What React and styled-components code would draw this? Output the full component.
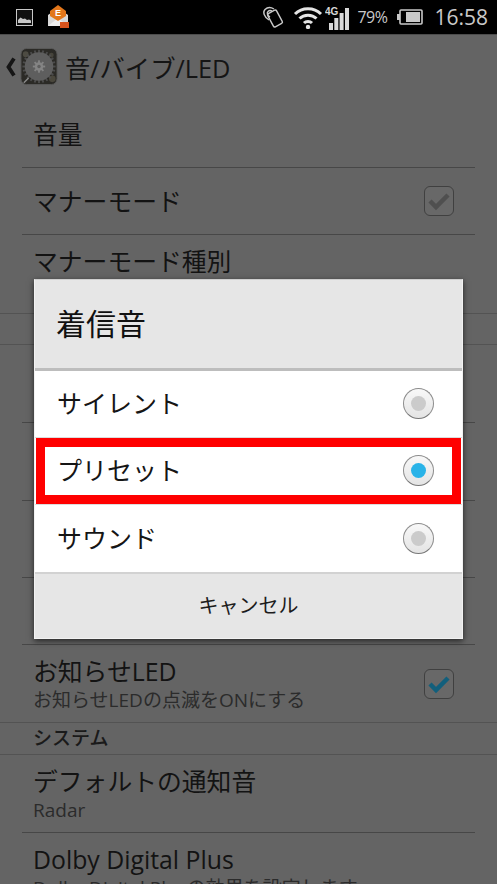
import styled, { createGlobalStyle } from "styled-components";

const GlobalStyle = createGlobalStyle`
  html, body {
    margin: 0;
    padding: 0;
    background: #646464;
  }
`;

const FONT = `"Open Sans", "Noto Sans CJK JP", sans-serif`;

const Page = styled.div`
  position: relative;
  width: 497px;
  height: 884px;
  overflow: hidden;
  background: #646464;
  font-family: ${FONT};
  color: #111;
`;

const StatusBar = styled.div`
  height: 34px;
  background: #000;
  display: flex;
  align-items: center;
  color: #c9c9c9;
`;

const StatusLeft = styled.div`
  display: flex;
  align-items: center;
  gap: 15px;
  padding-left: 16px;
  flex: 1;
`;

const StatusRight = styled.div`
  display: flex;
  align-items: center;
  gap: 8px;
  padding-right: 9px;
`;

const SignalGroup = styled.div`
  display: flex;
  align-items: center;
  gap: 2px;
`;

const Percent = styled.span`
  font-size: 16px;
  margin: 0 2px 0 0;
  letter-spacing: -0.5px;
`;

const Clock = styled.span`
  font-size: 21px;
  margin-left: 3px;
`;

const Header = styled.div`
  height: 66px;
  display: flex;
  align-items: center;
  padding: 0 0 2px 5px;
  box-sizing: border-box;
  border-top: 1px solid #4c4c4c;
`;

const HeaderIcon = styled.svg`
  margin-left: 4px;
`;

const HeaderTitle = styled.div`
  font-size: 25.3px;
  margin-left: 7px;
  color: #151515;
`;

const Row = styled.div`
  height: ${(p) => p.$h}px;
  box-sizing: border-box;
  margin: 0 22px;
  padding: 0 21px 0 12px;
  display: flex;
  align-items: ${(p) => (p.$sub ? "flex-start" : "center")};
  justify-content: space-between;
  border-bottom: ${(p) => (p.$flush ? "none" : "1px solid #474747")};
`;

const RowText = styled.div`
  padding-top: ${(p) => (p.$sub ? 9 : 0)}px;
`;

const RowTitle = styled.div`
  font-size: 24.8px;
  line-height: 34px;
  margin-left: -1px;
  color: #131313;
`;

const RowSub = styled.div`
  font-size: 19px;
  line-height: 25px;
  margin-left: -1px;
  color: #2b2b2b;
`;

const Section = styled.div`
  height: ${(p) => p.$h}px;
  box-sizing: border-box;
  padding: 0 0 3px 33px;
  display: flex;
  align-items: center;
  font-size: 19px;
  font-weight: 500;
  color: #1a1a1a;
  border-top: 1px solid #535353;
  border-bottom: 1px solid #535353;
`;

const CheckBox = styled.div`
  width: 28px;
  height: 28px;
  margin-top: ${(p) => (p.$sub ? 24 : 0)}px;
  border: 1px solid #404040;
  border-radius: 6px;
  background: #686868;
  display: flex;
  align-items: center;
  justify-content: center;
`;

const Dialog = styled.div`
  position: absolute;
  left: 34px;
  top: 279px;
  width: 429px;
  height: 360px;
  box-sizing: border-box;
  border: 1px solid #f2f2f2;
  border-top-color: #cfcfcf;
  background: #fff;
  box-shadow: 0 2px 6px rgba(0, 0, 0, 0.65);
  display: flex;
  flex-direction: column;
`;

const DialogTitle = styled.div`
  height: 91px;
  box-sizing: border-box;
  background: #e6e6e6;
  border-bottom: 3px solid #bdbdbd;
  padding: 0 0 4px 21px;
  display: flex;
  align-items: center;
  font-size: 30px;
  color: #111;
`;

const Option = styled.div`
  position: relative;
  height: 67px;
  box-sizing: border-box;
  padding: 0 28px 0 22px;
  display: flex;
  align-items: center;
  justify-content: space-between;
  font-size: 25px;
  color: #151515;
  border-bottom: ${(p) => (p.$last ? "none" : "1px solid #dcdcdc")};
`;

const OptionLabel = styled.span`
  position: relative;
  margin-top: -4px;
`;

const Highlight = styled.div`
  position: absolute;
  left: 1px;
  right: 1px;
  top: 0;
  bottom: 0;
  border: 9px solid #ff0000;
`;

const Radio = styled.div`
  position: relative;
  z-index: 1;
  width: 29px;
  height: 29px;
  margin-top: -1px;
  border: 1px solid #8c8c8c;
  border-bottom-color: #777;
  border-radius: 50%;
  background: linear-gradient(#f8f8f8, #e4e4e4);
  display: flex;
  align-items: center;
  justify-content: center;
`;

const RadioDot = styled.div`
  width: 15px;
  height: 15px;
  border-radius: 50%;
  background: ${(p) => (p.$on ? "#29b3e8" : "#cbcbcb")};
`;

const CancelButton = styled.div`
  flex: 1;
  background: #e6e6e6;
  border-top: 2px solid #d2d2d2;
  padding-bottom: 4px;
  display: flex;
  align-items: center;
  justify-content: center;
  font-size: 20px;
  color: #1c1c1c;
`;

function GalleryIcon() {
  return (
    <svg width="17" height="17" viewBox="0 0 17 17">
      <rect x="0.5" y="0.5" width="16" height="16" fill="#111" stroke="#c8c8c8" />
      <path d="M2 14V11L4.5 8.5L7 10L9 9.5L11 11L13 10.5L15 11.5V14Z" fill="#c8c8c8" />
    </svg>
  );
}

function MailIcon() {
  return (
    <svg width="22" height="24" viewBox="0 1 22 24">
      <path d="M0 11L10 4L20 11V22H0Z" fill="#d8d8d8" />
      <path d="M0 22L10 14L20 22Z" fill="#eeeeee" />
      <path d="M2 7L10 1L18 7V12L10 17L2 12Z" fill="#e2761a" />
      <text x="10" y="12" fontSize="9" fontWeight="700" textAnchor="middle" fill="#fff" fontFamily="Liberation Sans, sans-serif">E</text>
      <rect x="12" y="18" width="9" height="6" fill="#d8531c" />
    </svg>
  );
}

function NfcIcon() {
  return (
    <svg width="24" height="26" viewBox="0 0 24 26" fill="none" stroke="#c9c9c9" strokeWidth="1.4">
      <rect x="9" y="7" width="10" height="15" rx="1.5" transform="rotate(-28 14 14.5)" />
      <path d="M8 16C3 13 1.5 8 4 5.5C6.5 3 10 3 13 5" />
      <path d="M9 13C6.5 11.5 5.5 9 7 7.5C8 6.5 10 6.5 11 7" />
    </svg>
  );
}

function WifiIcon() {
  return (
    <svg width="30" height="24" viewBox="0 0 30 24" fill="none" stroke="#e4e4e4" strokeWidth="3">
      <path d="M2 9C9 2 21 2 28 9" />
      <path d="M6.5 13.5C11 9 19 9 23.5 13.5" />
      <path d="M11 18C13 16 17 16 19 18" />
      <circle cx="15" cy="22" r="2.2" fill="#e4e4e4" stroke="none" />
    </svg>
  );
}

function SignalIcon() {
  return (
    <svg width="24" height="25" viewBox="0 0 24 25">
      <text x="0" y="10" fontSize="10" fontWeight="700" fill="#d8d8d8" fontFamily="Liberation Sans, sans-serif">4G</text>
      <rect x="4" y="18" width="4" height="7" fill="#d8d8d8" />
      <rect x="9.3" y="13" width="4" height="12" fill="#d8d8d8" />
      <rect x="14.6" y="8" width="4" height="17" fill="#d8d8d8" />
      <rect x="20" y="3" width="4" height="22" fill="#d8d8d8" />
    </svg>
  );
}

function BatteryIcon() {
  return (
    <svg width="26" height="16" viewBox="0 0 26 16">
      <rect x="0" y="5" width="3" height="6" fill="#c9c9c9" />
      <rect x="3" y="1" width="22" height="14" rx="1" fill="none" stroke="#c9c9c9" strokeWidth="1.6" />
      <rect x="9" y="3" width="14" height="10" fill="#c9c9c9" />
    </svg>
  );
}

function AppIcon() {
  const teeth = Array.from({ length: 24 }, (_, i) => i * 15);
  const hub = Array.from({ length: 8 }, (_, i) => i * 45);
  return (
    <HeaderIcon width="38" height="39" viewBox="0 0 40 40">
      <rect x="1" y="1" width="38" height="38" rx="6" fill="#2b2a26" stroke="#5a5a5a" />
      <circle cx="6" cy="7" r="3" fill="#4d4b42" />
      <circle cx="34" cy="33" r="3.5" fill="#4a473c" />
      <circle cx="33" cy="8" r="2.5" fill="#46443b" />
      {teeth.map((a) => (
        <rect key={a} x="19" y="2.5" width="2" height="4" fill="#4c4c4c" transform={`rotate(${a} 20 20)`} />
      ))}
      <circle cx="20" cy="20" r="15" fill="#5e5e5e" />
      {hub.map((a) => (
        <rect key={a} x="19" y="13.5" width="2" height="3" fill="#848484" transform={`rotate(${a} 20 20)`} />
      ))}
      <circle cx="20" cy="20" r="4.5" fill="#848484" />
      <circle cx="20" cy="20" r="1.8" fill="#5e5e5e" />
      <path d="M4 37L9 32" stroke="#8a8a8a" strokeWidth="1.5" />
    </HeaderIcon>
  );
}

function CheckMark({ on }) {
  return (
    <svg width="24" height="20" viewBox="0 0 24 20" fill="none">
      <path d="M3 10L9 16L21 4" stroke={on ? "#125f7c" : "#4f4f4f"} strokeWidth="4.5" />
    </svg>
  );
}

const options = ["サイレント", "プリセット", "サウンド"];

function App() {
  return (
    <Page>
      <GlobalStyle />
      <StatusBar>
        <StatusLeft>
          <GalleryIcon />
          <MailIcon />
        </StatusLeft>
        <StatusRight>
          <NfcIcon />
          <SignalGroup>
            <WifiIcon />
            <SignalIcon />
          </SignalGroup>
          <Percent>79%</Percent>
          <BatteryIcon />
          <Clock>16:58</Clock>
        </StatusRight>
      </StatusBar>

      <Header>
        <svg width="11" height="20" viewBox="0 0 11 20">
          <path d="M9 1.5L3.5 10L9 18.5" fill="none" stroke="#161616" strokeWidth="3.8" />
        </svg>
        <AppIcon />
        <HeaderTitle>音/バイブ/LED</HeaderTitle>
      </Header>

      <Row $h={68}>
        <RowTitle>音量</RowTitle>
      </Row>
      <Row $h={67}>
        <RowTitle>マナーモード</RowTitle>
        <CheckBox>
          <CheckMark />
        </CheckBox>
      </Row>
      <Row $h={78} $sub $flush>
        <RowText $sub>
          <RowTitle>マナーモード種別</RowTitle>
        </RowText>
      </Row>
      <Section $h={32} />
      <Row $h={78} />
      <Row $h={78} />
      <Row $h={77} />
      <Row $h={67} />
      <Row $h={77} $sub $flush>
        <RowText $sub>
          <RowTitle>お知らせLED</RowTitle>
          <RowSub>お知らせLEDの点滅をONにする</RowSub>
        </RowText>
        <CheckBox $sub>
          <CheckMark on />
        </CheckBox>
      </Row>
      <Section $h={33}>システム</Section>
      <Row $h={78} $sub>
        <RowText $sub>
          <RowTitle>デフォルトの通知音</RowTitle>
          <RowSub>Radar</RowSub>
        </RowText>
      </Row>
      <Row $h={78} $sub $flush>
        <RowText $sub>
          <RowTitle>Dolby Digital Plus</RowTitle>
          <RowSub>Dolby Digital Plusの効果を設定します</RowSub>
        </RowText>
      </Row>

      <Dialog>
        <DialogTitle>着信音</DialogTitle>
        {options.map((label, i) => (
          <Option key={label} $last={i === options.length - 1}>
            {i === 1 && <Highlight />}
            <OptionLabel>{label}</OptionLabel>
            <Radio>
              <RadioDot $on={i === 1} />
            </Radio>
          </Option>
        ))}
        <CancelButton>キャンセル</CancelButton>
      </Dialog>
    </Page>
  );
}

export default App;
